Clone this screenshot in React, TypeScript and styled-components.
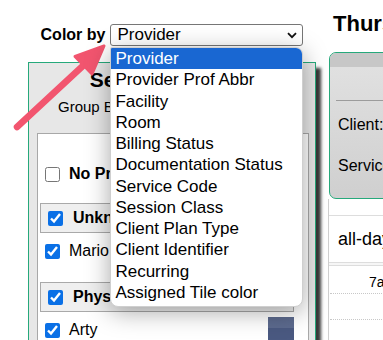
import styled, { createGlobalStyle } from "styled-components";

const GlobalStyle = createGlobalStyle`
  html, body { margin: 0; padding: 0; background: #fff; overflow: hidden; }
  body { font-family: "Liberation Sans", Arial, sans-serif; color: #000; }
`;

const colorOptions = [
  "Provider",
  "Provider Prof Abbr",
  "Facility",
  "Room",
  "Billing Status",
  "Documentation Status",
  "Service Code",
  "Session Class",
  "Client Plan Type",
  "Client Identifier",
  "Recurring",
  "Assigned Tile color",
];

const groups = [
  { name: "Unknown", providers: [{ name: "Mario", color: "#6f8f5c" }] },
  { name: "Physical Therapist", providers: [{ name: "Arty", color: "#4a5981" }] },
];

const Page = styled.div`
  position: relative;
  display: flex;
  align-items: flex-start;
  width: 383px;
  height: 340px;
  overflow: hidden;
`;

const LeftColumn = styled.div`
  flex: 0 0 288px;
  margin-left: 28px;
  padding-top: 24px;
`;

const Toolbar = styled.div`
  display: flex;
  justify-content: center;
  align-items: center;
  gap: 5px;
  height: 22px;
`;

const ToolbarLabel = styled.span`
  font-size: 16px;
  font-weight: bold;
`;

const SelectBox = styled.div`
  position: relative;
  box-sizing: border-box;
  width: 193px;
  height: 22px;
  display: flex;
  align-items: center;
  justify-content: space-between;
  padding: 0 5px 0 6px;
  border: 1px solid #767676;
  border-radius: 3px;
  background: #fff;
  font-size: 17px;
`;

const Listbox = styled.ul`
  position: absolute;
  top: 22px;
  left: -1px;
  z-index: 10;
  box-sizing: border-box;
  width: 193px;
  margin: 0;
  padding: 0 0 3px;
  list-style: none;
  background: #fff;
  border: 1px solid #cfcfcf;
  border-radius: 2px 7px 8px 8px;
  box-shadow: 0 5px 24px rgba(0, 0, 0, 0.34);
  overflow: hidden;
`;

const Option = styled.li<{ $active?: boolean }>`
  height: 21.25px;
  line-height: 21.25px;
  padding-left: 4px;
  font-size: 17px;
  white-space: nowrap;
  color: ${(p) => (p.$active ? "#fff" : "#000")};
  background: ${(p) => (p.$active ? "#1967d2" : "transparent")};
`;

const Panel = styled.div`
  box-sizing: border-box;
  height: 420px;
  margin-top: 16px;
  border: 1px solid #26a97b;
  background: #e7e7e7;
  box-shadow: 5px 6px 3px #3a3a3a;
`;

const PanelTitle = styled.div`
  padding-top: 6px;
  text-align: center;
  font-size: 21px;
  line-height: 22px;
  font-weight: bold;
  white-space: nowrap;
`;

const PanelSubtitle = styled.div`
  margin-top: 7px;
  padding-left: 29px;
  font-size: 15px;
  line-height: 18px;
`;

const ProviderList = styled.div`
  height: 260px;
  margin: 17px 6px 0 8px;
  padding: 0 14px 0 2px;
  border: 1px solid #a8a8a8;
  background: #fff;
`;

const Check = styled.input.attrs({ type: "checkbox" })`
  width: 15px;
  height: 15px;
  margin: 0;
  flex: 0 0 auto;
  accent-color: #0a70e6;
`;

const NoneRow = styled.label`
  display: flex;
  align-items: center;
  gap: 9px;
  height: 26px;
  margin-top: 27px;
  padding-left: 5px;
  font-size: 16px;
  font-weight: bold;
`;

const GroupHeader = styled.label<{ $first?: boolean }>`
  box-sizing: border-box;
  display: flex;
  align-items: center;
  gap: 10px;
  height: 30px;
  margin-top: ${(p) => (p.$first ? "16px" : "13px")};
  padding-left: 7px;
  border: 1px solid #a9a9a9;
  background: #efefef;
  font-size: 16px;
  font-weight: bold;
  white-space: nowrap;
`;

const ProviderRow = styled.label`
  display: flex;
  align-items: center;
  gap: 9px;
  padding: 5px 0 5px 5px;
  font-size: 16px;
`;

const ProviderName = styled.span`
  flex: 1;
`;

const Swatch = styled.span<{ $color: string }>`
  width: 26px;
  height: 26px;
  background: linear-gradient(rgba(255, 255, 255, 0.1) 0 42%, transparent 42%), ${(p) => p.$color};
`;

const RightColumn = styled.div`
  flex: 0 0 300px;
  margin-left: 12px;
`;

const DayTitle = styled.h2`
  margin: 12px 0 0;
  padding-left: 5px;
  font-size: 22px;
  line-height: 24px;
  white-space: nowrap;
`;

const EventCard = styled.div`
  margin: 16px 0 0 1px;
  border: 1px solid #26a97b;
  border-radius: 7px 0 0 7px;
  overflow: hidden;
  background: linear-gradient(#e2e2e2, #cfcfcf);
`;

const CardBand = styled.div`
  height: 14px;
  background: #c7c7c7;
`;

const CardTop = styled.div`
  height: 33px;
  border-bottom: 1px solid #9c9c9c;
  margin-left: 6px;
`;

const CardBody = styled.div`
  display: flex;
  flex-direction: column;
  gap: 21px;
  padding: 14px 0 22px 8px;
  font-size: 16px;
  line-height: 20px;
  white-space: nowrap;
`;

const Calendar = styled.div`
  padding-top: 16px;
  border-left: 1px solid #cfcfcf;
`;

const AllDayRow = styled.div`
  display: flex;
  align-items: center;
  height: 46px;
  padding-left: 9px;
  border-top: 1px solid #ddd;
  font-size: 18px;
`;

const Divider = styled.div`
  height: 2px;
  border-top: 1px solid #ddd;
  border-bottom: 1px solid #ddd;
  background: #f6f6f6;
`;

const Slot = styled.div<{ $first?: boolean }>`
  box-sizing: border-box;
  height: ${(p) => (p.$first ? "28px" : "26px")};
  margin-left: 1px;
  padding: 8px 0 0 39px;
  border-bottom: 1px dotted #c8c8c8;
  font-size: 14px;
  line-height: 16px;
`;

const Annotation = styled.svg`
  position: absolute;
  left: 0;
  top: 0;
  z-index: 5;
  pointer-events: none;
`;

export default function App() {
  return (
    <Page>
      <GlobalStyle />
      <LeftColumn>
        <Toolbar>
          <ToolbarLabel>Color by</ToolbarLabel>
          <SelectBox>
            <span>Provider</span>
            <svg width="10" height="7" viewBox="0 0 10 7">
              <path d="M1 1.2l4 4 4-4" fill="none" stroke="#111" strokeWidth="1.8" />
            </svg>
            <Listbox>
              {colorOptions.map((o, i) => (
                <Option key={o} $active={i === 0}>
                  {o}
                </Option>
              ))}
            </Listbox>
          </SelectBox>
        </Toolbar>
        <Panel>
          <PanelTitle>Select Providers</PanelTitle>
          <PanelSubtitle>Group By Provider Type</PanelSubtitle>
          <ProviderList>
            <NoneRow>
              <Check readOnly />
              No Providers
            </NoneRow>
            {groups.map((g, gi) => (
              <div key={g.name}>
                <GroupHeader $first={gi === 0}>
                  <Check checked readOnly />
                  {g.name}
                </GroupHeader>
                {g.providers.map((p) => (
                  <ProviderRow key={p.name}>
                    <Check checked readOnly />
                    <ProviderName>{p.name}</ProviderName>
                    <Swatch $color={p.color} />
                  </ProviderRow>
                ))}
              </div>
            ))}
          </ProviderList>
        </Panel>
      </LeftColumn>
      <RightColumn>
        <DayTitle>Thursday, March 6</DayTitle>
        <EventCard>
          <CardBand />
          <CardTop />
          <CardBody>
            <span>Client: Jane Doe</span>
            <span>Service: Evaluation</span>
          </CardBody>
        </EventCard>
        <Calendar>
          <AllDayRow>all-day</AllDayRow>
          <Divider />
          <Slot $first>7am</Slot>
          <Slot />
          <Slot />
        </Calendar>
      </RightColumn>
      <Annotation width="383" height="340" viewBox="0 0 383 340">
        <line x1="17" y1="127" x2="86" y2="63" stroke="#f2556f" strokeWidth="6.5" strokeLinecap="round" />
        <polygon
          points="104,46 75,56.5 92,74"
          fill="#f2556f"
          stroke="#f2556f"
          strokeWidth="3"
          strokeLinejoin="round"
        />
      </Annotation>
    </Page>
  );
}
